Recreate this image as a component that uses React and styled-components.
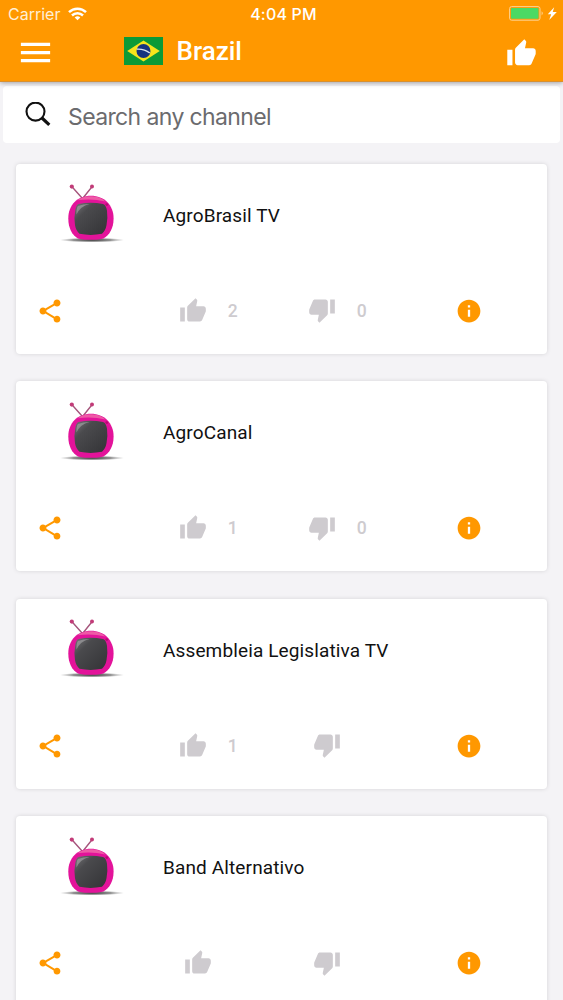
import React from "react";
import styled, { createGlobalStyle } from "styled-components";
import { IoMdMenu, IoMdShare, IoMdInformationCircle } from "react-icons/io";
import { MdThumbUp, MdThumbDown } from "react-icons/md";

const channels = [
  { name: "AgroBrasil TV", likes: 2, dislikes: 0 },
  { name: "AgroCanal", likes: 1, dislikes: 0 },
  { name: "Assembleia Legislativa TV", likes: 1 },
  { name: "Band Alternativo" }
];

const App = () => {
  return (
    <>
      <GlobalStyle />
      <Screen>
        <Header>
          <StatusBar>
            <Carrier>
              Carrier
              <Wifi />
            </Carrier>
            <Time>4:04 PM</Time>
            <Battery />
          </StatusBar>
          <NavBar>
            <IoMdMenu size={39} />
            <Country>
              <Flag />
              <h1>Brazil</h1>
            </Country>
            <Favorites>
              <MdThumbUp size={31} />
            </Favorites>
          </NavBar>
        </Header>
        <SearchBar>
          <SearchIcon />
          <SearchInput placeholder="Search any channel" />
        </SearchBar>
        <List>
          {channels.map(channel => (
            <Channel key={channel.name} {...channel} />
          ))}
        </List>
      </Screen>
    </>
  );
};

const Channel = ({ name, likes, dislikes }) => (
  <Card>
    <Info>
      <Television />
      <h2>{name}</h2>
    </Info>
    <Actions>
      <Action>
        <IoMdShare size={28} />
      </Action>
      <Vote $empty={likes === undefined}>
        <MdThumbUp size={28} />
        {likes !== undefined && <span>{likes}</span>}
      </Vote>
      <Vote $empty={dislikes === undefined} $down>
        <MdThumbDown size={28} />
        {dislikes !== undefined && <span>{dislikes}</span>}
      </Vote>
      <Action>
        <IoMdInformationCircle size={28} />
      </Action>
    </Actions>
  </Card>
);

// Drawings
const Wifi = () => (
  <svg width="19" height="14" viewBox="0 0 19 14" fill="none" stroke="#fff" strokeWidth="2.5">
    <path d="M1 5.1a12.2 12.2 0 0 1 17 0" />
    <path d="M4 8.5a7.9 7.9 0 0 1 11 0" />
    <path d="M9.5 13.2 6.7 10.6a4 4 0 0 1 5.6 0z" fill="#fff" stroke="none" />
  </svg>
);

const Battery = () => (
  <svg width="49" height="15" viewBox="0 0 49 15">
    <rect x=".6" y=".6" width="30.4" height="13.6" rx="2" fill="none" stroke="#ffd391" />
    <rect x="2" y="2" width="27.5" height="10.8" rx="1" fill="#4cd964" />
    <path d="M32.6 5.3q2.4 2 0 4.2z" fill="#ffd391" />
    <path d="M45.2 1.2 38.8 8.3h3.4L40.2 14l7.6-8h-4.1z" fill="#fff" />
  </svg>
);

const Flag = () => (
  <svg width="39" height="28" viewBox="0 0 39 28">
    <path d="M0 0h39v28H0z" fill="#0b9a37" />
    <path d="M3.2 14 19.5 3.5 35.8 14 19.5 24.5z" fill="#f5e41c" />
    <circle cx="19.5" cy="14" r="7" fill="#17347f" />
    <path d="M12.8 12.1q7.5-.5 13 4" fill="none" stroke="#dce5ee" strokeWidth="1.3" />
  </svg>
);

const SearchIcon = () => (
  <svg width="26" height="26" viewBox="0 0 26 26" fill="none" stroke="#111">
    <circle cx="10.5" cy="9.6" r="9" strokeWidth="2.1" />
    <path d="m17 16 7.3 6.8" strokeWidth="3.2" />
  </svg>
);

const Television = () => (
  <svg width="68" height="62" viewBox="0 0 68 62">
    <defs>
      <linearGradient id="screen" x1="0" y1="0" x2="1" y2="1">
        <stop offset="0" stopColor="#77777a" />
        <stop offset=".3" stopColor="#4a4a4d" />
        <stop offset="1" stopColor="#333336" />
      </linearGradient>
      <radialGradient id="ground">
        <stop offset="0" stopColor="#333" />
        <stop offset=".6" stopColor="#777" stopOpacity=".8" />
        <stop offset="1" stopColor="#aaa" stopOpacity="0" />
      </radialGradient>
    </defs>
    <ellipse cx="33" cy="56" rx="32.5" ry="2.4" fill="url(#ground)" />
    <path d="M13 2.8 23 14M33 2.8 24 14" stroke="#a5557c" strokeWidth="1.4" />
    <circle cx="12.8" cy="2.6" r="2.1" fill="#c23b78" />
    <circle cx="33" cy="2.6" r="2" fill="#c23b78" />
    <path
      d="M32 11.8C45 11.8 54.6 21 54.6 34.5 54.6 44 50.5 51 44.5 54.5 40 56.3 23 56.3 19 54.5 13 51 9.3 44 9.3 34.5 9.3 21 18.5 11.8 32 11.8z"
      fill="#e3139a"
    />
    <path d="M18.5 16.2Q24 11.800 33 12.2q9 .6 13.5 5.3-13-3-28-1.300z" fill="#ee5aa6" />
    <path
      d="M19.5 20q12-2.600 24.500 0 3.200 1.200 4 6.800 1 8-.5 14.500-1 5.500-4.500 8.500-11.500 2.200-22.500 0-3.500-3-4.500-8.500-1.300-7 .2-14.500.6-5.600 3.300-6.800z"
      fill="url(#screen)"
    />
    <path d="M19 22q6-2.300 11.500-2.100-9.500 2.300-13 10.600-.5-6 1.500-8.500z" fill="#b7b7ba" opacity=".5" />
    <circle cx="47.8" cy="20.6" r="1.4" fill="#b90874" />
  </svg>
);

// Styles
const GlobalStyle = createGlobalStyle`
  * {
    box-sizing: border-box;
    margin: 0;
    padding: 0;
  }
  body {
    background: #f4f3f6;
    font-family: Roboto, sans-serif;
    overflow: hidden;
  }
  svg {
    display: block;
    flex-shrink: 0;
  }
`;

const Screen = styled.div`
  width: 563px;
  height: 1000px;
  overflow: hidden;
`;

const Header = styled.header`
  position: relative;
  z-index: 1;
  height: 82px;
  background: #ff9800;
  border-bottom: 1px solid #d8902f;
  box-shadow: 0 1px 5px rgba(0, 0, 0, 0.35);
  color: white;
`;

const StatusBar = styled.div`
  display: grid;
  grid-template-columns: 1fr auto 1fr;
  align-items: center;
  height: 28px;
  padding: 0 5px 0 8px;
  font-family: Inter, sans-serif;
  font-size: 16px;
  > svg {
    justify-self: end;
    margin-bottom: 1px;
  }
`;

const Carrier = styled.div`
  display: flex;
  align-items: center;
  gap: 8px;
  color: #ffefd5;
  svg {
    margin-bottom: 1px;
  }
`;

const Time = styled.span`
  padding-left: 1px;
  font-weight: 500;
  letter-spacing: 0.2px;
`;

const NavBar = styled.nav`
  display: flex;
  align-items: center;
  justify-content: space-between;
  height: 48px;
  padding: 0 26px 0 15.5px;
`;

const Country = styled.div`
  display: flex;
  align-items: center;
  flex: 1;
  gap: 14px;
  padding: 0 0 2px 69px;
  h1 {
    font-size: 26px;
    font-weight: 500;
  }
`;

const Favorites = styled.div`
  padding-top: 2px;
`;

const SearchBar = styled.div`
  display: flex;
  align-items: center;
  gap: 17px;
  height: 57px;
  margin: 4px 3px 0;
  padding: 0 22px;
  border-radius: 4px;
  background: white;
`;

const SearchInput = styled.input`
  flex: 1;
  padding-top: 4px;
  border: none;
  outline: none;
  background: none;
  font-family: Inter, sans-serif;
  font-size: 23px;
  letter-spacing: -0.62px;
  &::placeholder {
    color: #6b6b6e;
  }
`;

const List = styled.main`
  display: flex;
  flex-direction: column;
  gap: 27.5px;
  padding: 20.5px 16px 0;
`;

const Card = styled.article`
  flex-shrink: 0;
  width: 531px;
  height: 190px;
  border-radius: 4px;
  background: white;
  box-shadow: 0 0 4px rgba(0, 0, 0, 0.13);
`;

const Info = styled.div`
  display: flex;
  align-items: center;
  gap: 36px;
  height: 103px;
  padding-left: 43px;
  h2 {
    font-size: 19px;
    font-weight: 400;
    color: #111;
    letter-spacing: 0.13px;
  }
`;

const Actions = styled.div`
  display: grid;
  grid-template-columns: 142.8px 129px 147.7px 1fr;
  align-items: center;
  height: 88px;
  padding: 0 0 0 20px;
`;

const Action = styled.div`
  color: #ff9800;
`;

const Vote = styled.div`
  display: flex;
  align-items: center;
  gap: 1px;
  padding-left: ${({ $empty }) => ($empty ? "5px" : "0")};
  color: #cecbcf;
  svg {
    margin-bottom: ${({ $down }) => ($down ? "1px" : "0")};
  }
  span {
    width: 50px;
    text-align: center;
    font-size: 17.5px;
    font-weight: 500;
  }
`;

export default App;
